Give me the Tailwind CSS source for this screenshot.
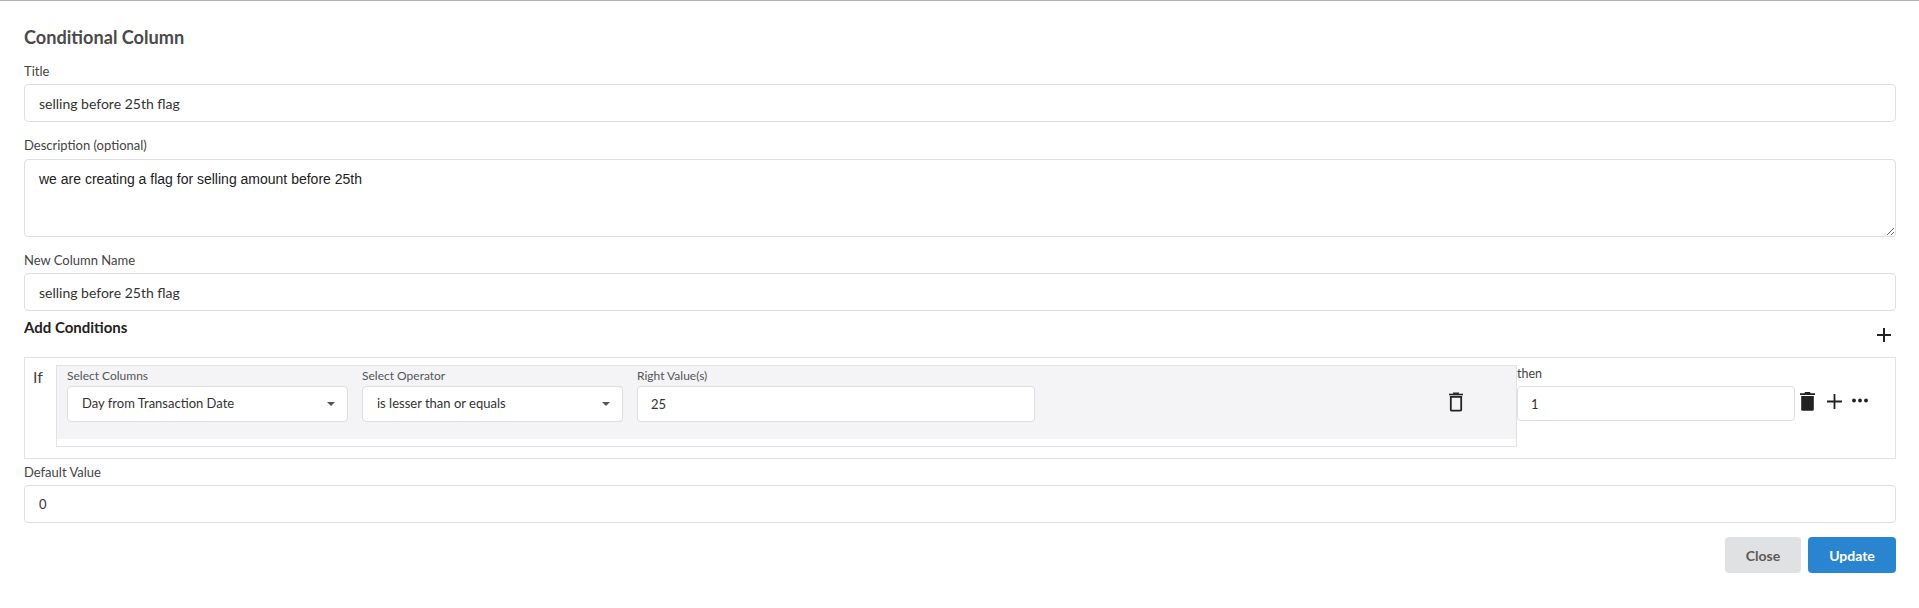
<!DOCTYPE html>
<html lang="en">

<head>
  <meta charset="UTF-8" />
  <meta name="viewport" content="width=device-width, initial-scale=1.0" />
  <title>Conditional Column</title>
  <script src="https://cdn.jsdelivr.net/npm/@tailwindcss/browser@4"></script>
</head>

<body class="bg-white h-[608px] overflow-hidden font-['Lato',sans-serif] text-[#333]">
  <div class="border-t border-t-[#b0b0b0] pl-6 pr-[23px] pt-[25px]">
    <h2 class="text-[18.15px] leading-[22px] font-bold text-[#4a4a4a]">Conditional Column</h2>

    <label class="block mt-[15px] text-[13px] leading-4 text-[#444]">Title</label>
    <input type="text" value="selling before 25th flag"
      class="block w-full h-[38px] mt-[5px] px-[14px] text-[14px] text-[#333] border border-[#dedede] rounded-[4px]" />

    <label class="block mt-[15px] text-[13px] leading-4 text-[#444]">Description (optional)</label>
    <textarea
      class="block w-full h-[78px] mt-[6px] px-[14px] py-[9px] text-[14px] leading-[20px] font-['Liberation_Sans',sans-serif] text-[#222] border border-[#dedede] rounded-[4px]">we are creating a flag for selling amount before 25th</textarea>

    <label class="block mt-[15px] text-[13px] leading-4 text-[#444]">New Column Name</label>
    <input type="text" value="selling before 25th flag"
      class="block w-full h-[38px] mt-[5px] px-[14px] text-[14px] text-[#333] border border-[#dedede] rounded-[4px]" />

    <div class="flex justify-between h-[46px] pt-[7px]">
      <div class="text-[15px] leading-[18px] font-bold text-[#222]">Add Conditions</div>
      <svg class="w-4 h-4 mt-[9px] mr-[4px]" viewBox="0 0 16 16" fill="none" stroke="#222" stroke-width="2">
        <path d="M8 1v14M1 8h14" />
      </svg>
    </div>

    <!-- condition box -->
    <div class="flex h-[102px] border border-[#e0e2e6] pt-[7px] pl-2">
      <div class="w-[23px] text-[16px] leading-6 text-[#444]">If</div>

      <div class="w-[1461px] h-[82px] border border-[#e0e2e6] shrink-0">
        <div class="flex h-[73px] bg-[#f4f4f7] pl-[10px] pt-[2px]">
          <div class="w-[281px]">
            <div class="text-[12px] leading-[15px] text-[#555]">Select Columns</div>
            <div class="flex items-center justify-between h-[36px] mt-[3px] pl-[14px] pr-[12px] text-[13px] text-[#333] bg-white border border-[#dedede] rounded-[4px]">
              Day from Transaction Date
              <span class="border-x-[4px] border-x-transparent border-t-[4px] border-t-[#555]"></span>
            </div>
          </div>
          <div class="w-[261px] ml-[14px]">
            <div class="text-[12px] leading-[15px] text-[#555]">Select Operator</div>
            <div class="flex items-center justify-between h-[36px] mt-[3px] pl-[14px] pr-[12px] text-[13px] text-[#333] bg-white border border-[#dedede] rounded-[4px]">
              is lesser than or equals
              <span class="border-x-[4px] border-x-transparent border-t-[4px] border-t-[#555]"></span>
            </div>
          </div>
          <div class="w-[398px] ml-[14px]">
            <div class="text-[12px] leading-[15px] text-[#555]">Right Value(s)</div>
            <input type="text" value="25"
              class="block w-full h-[36px] mt-[3px] px-[13px] text-[13px] text-[#333] bg-white border border-[#dedede] rounded-[4px]" />
          </div>
          <div class="flex flex-1 justify-end pt-[24px] pr-[52px]">
            <svg class="w-[16px] h-[20px]" viewBox="0 0 16 20" fill="none" stroke="#222">
              <path d="M1 2.500h14" stroke-width="1.600" />
              <path d="M5 1.200h6" stroke-width="1.400" />
              <path d="M2.800 4.800h10.400v13a.9.9 0 0 1-.9.9H3.700a.9.9 0 0 1-.9-.9z" stroke-width="1.800" />
            </svg>
          </div>
        </div>
      </div>

      <div class="w-[278px] shrink-0">
        <div class="text-[12.5px] leading-[17px] text-[#444]">then</div>
        <input type="text" value="1"
          class="block w-full h-[35px] mt-[4px] px-[13px] text-[13px] text-[#333] border border-[#dedede] rounded-[4px]" />
      </div>

      <div class="flex items-start pt-[27px] ml-[5px]">
        <svg class="w-[15px] h-[19px]" viewBox="0 0 15 19" fill="#222">
          <path d="M5 0h5l.6 1.200H15v1.800H0V1.200h4.400z" />
          <path d="M1.200 4h12.600v13.400a1.400 1.400 0 0 1-1.400 1.400H2.600a1.400 1.400 0 0 1-1.400-1.400z" />
        </svg>
        <svg class="w-[15px] h-[15px] ml-[12px] mt-[2px]" viewBox="0 0 15 15" fill="none" stroke="#222" stroke-width="1.800">
          <path d="M7.500 0v15M0 7.500h15" />
        </svg>
        <svg class="w-[16px] h-[5px] ml-[10px] mt-[6px]" viewBox="0 0 16 5" fill="#222">
          <circle cx="2" cy="2.500" r="1.900" />
          <circle cx="8" cy="2.500" r="1.900" />
          <circle cx="14" cy="2.500" r="1.900" />
        </svg>
      </div>
    </div>

    <label class="block mt-[5px] text-[13px] leading-4 text-[#444]">Default Value</label>
    <input type="text" value="0"
      class="block w-full h-[38px] mt-[5px] px-[14px] text-[13px] text-[#333] border border-[#dedede] rounded-[4px]" />

    <div class="flex justify-end gap-[7px] mt-[14px]">
      <button class="w-[76px] h-[36px] text-[14px] font-bold text-[#5a5a5a] bg-[#e0e1e2] rounded-[4px]">Close</button>
      <button class="w-[88px] h-[36px] text-[14px] font-bold text-white bg-[#2a85d0] rounded-[4px]">Update</button>
    </div>
  </div>
</body>

</html>
